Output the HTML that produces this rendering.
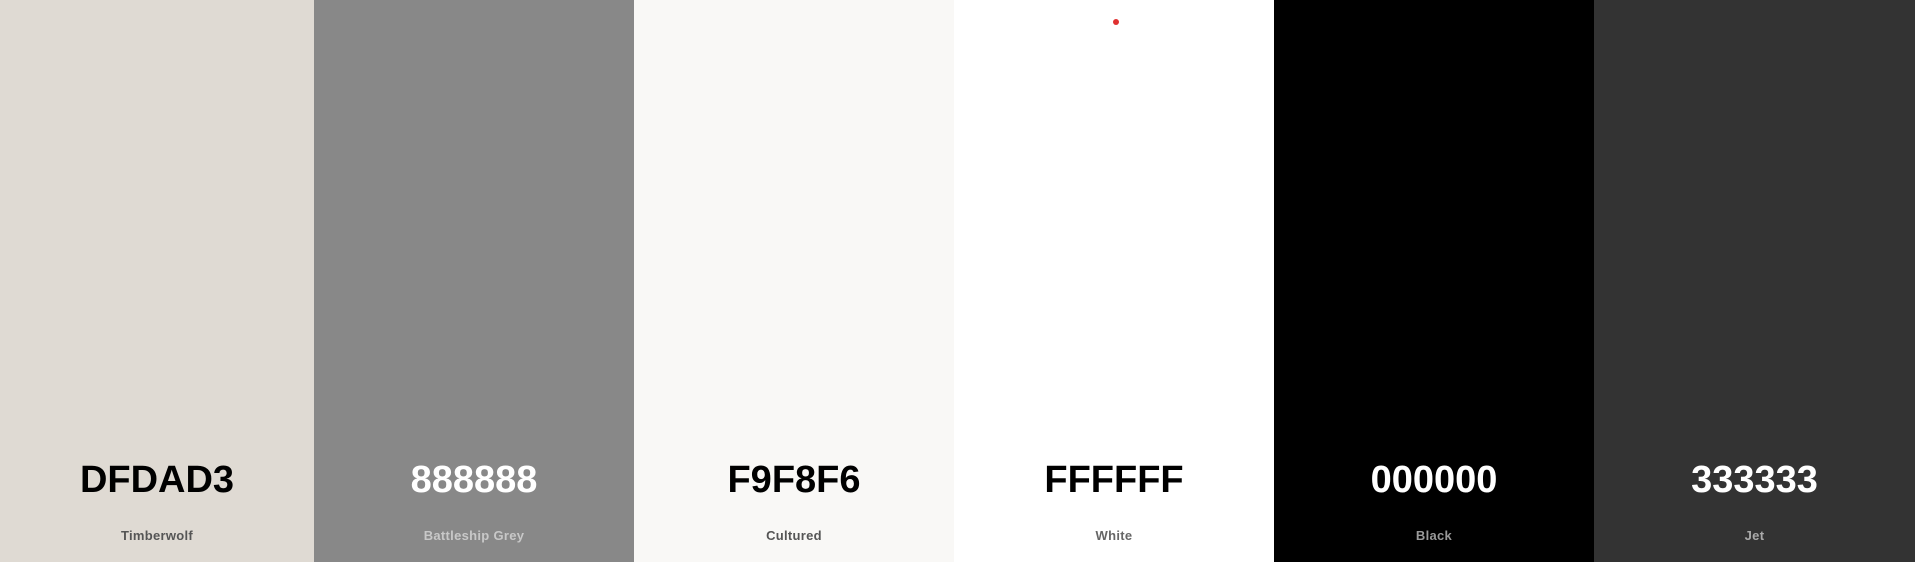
<!DOCTYPE html>
<html><head><meta charset="utf-8"><style>
html,body{margin:0;padding:0;width:1915px;height:562px;overflow:hidden;font-family:"Liberation Sans",sans-serif}
.row{display:flex;height:562px}
.c{position:relative;width:320px;flex:none}
.c:first-child{width:314px}
.h{position:absolute;left:0;right:0;top:459px;text-align:center;font-weight:bold;font-size:38px}
.n{position:absolute;left:0;right:0;top:528px;text-align:center;font-weight:bold;font-size:13px;letter-spacing:0.3px}
.dot{position:absolute;left:1113px;top:19px;width:6px;height:6px;border-radius:50%;background:#e03030}
</style></head><body>
<div class="row">
<div class="c" style="background:#DFDAD3"><div class="h" style="color:#000">DFDAD3</div><div class="n" style="color:#555">Timberwolf</div></div>
<div class="c" style="background:#888888"><div class="h" style="color:#fff">888888</div><div class="n" style="color:#c8c8c8">Battleship Grey</div></div>
<div class="c" style="background:#F9F8F6"><div class="h" style="color:#000">F9F8F6</div><div class="n" style="color:#555">Cultured</div></div>
<div class="c" style="background:#FFFFFF"><div class="h" style="color:#000">FFFFFF</div><div class="n" style="color:#666">White</div></div>
<div class="c" style="background:#000000"><div class="h" style="color:#fff">000000</div><div class="n" style="color:#999">Black</div></div>
<div class="c" style="background:#333333;width:321px"><div class="h" style="color:#fff">333333</div><div class="n" style="color:#aaa">Jet</div></div>
</div>
<div class="dot"></div>
</body></html>
